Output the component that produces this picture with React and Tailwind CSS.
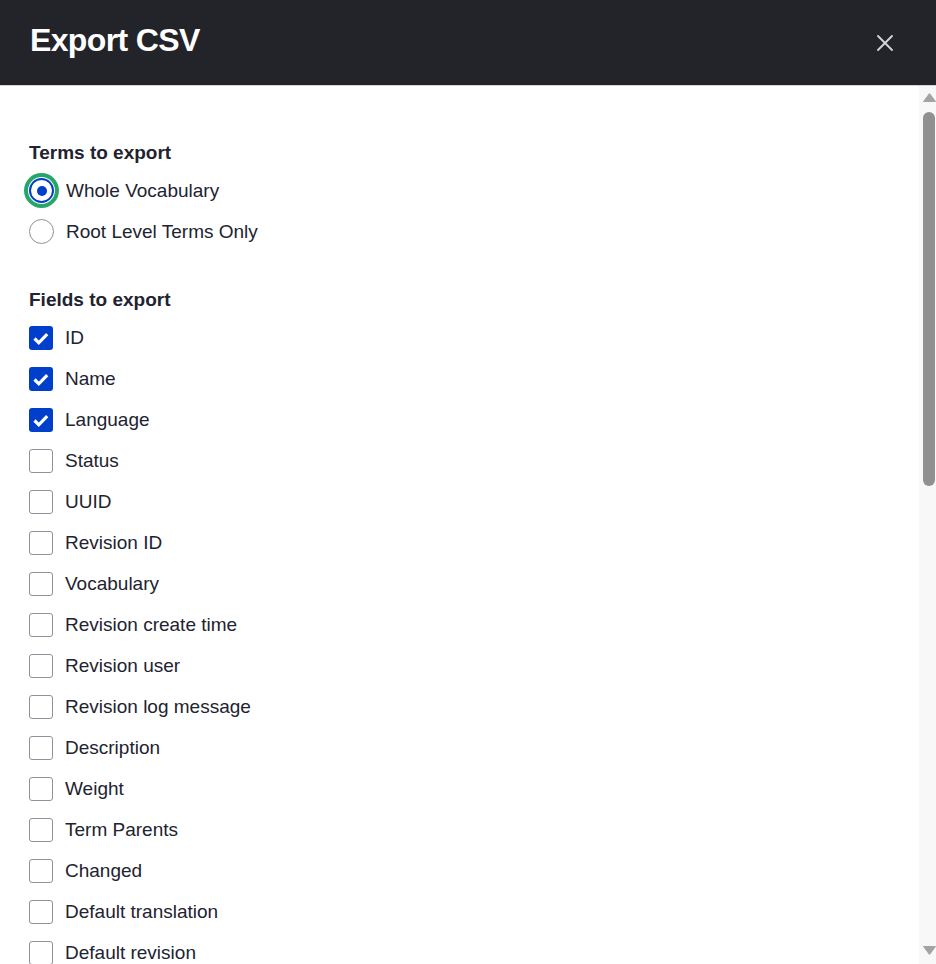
import { X } from 'lucide-react';

const terms = [
    { label: 'Whole Vocabulary', checked: true },
    { label: 'Root Level Terms Only', checked: false },
];

const fields = [
    { label: 'ID', checked: true },
    { label: 'Name', checked: true },
    { label: 'Language', checked: true },
    { label: 'Status' },
    { label: 'UUID' },
    { label: 'Revision ID' },
    { label: 'Vocabulary' },
    { label: 'Revision create time' },
    { label: 'Revision user' },
    { label: 'Revision log message' },
    { label: 'Description' },
    { label: 'Weight' },
    { label: 'Term Parents' },
    { label: 'Changed' },
    { label: 'Default translation' },
    { label: 'Default revision' },
    { label: 'Revision translation affected' },
    { label: 'Published' },
    { label: 'URL alias' },
];

function Radio({ checked }) {
    if (checked) {
        return (
            <span className="flex h-[25px] w-[25px] shrink-0 items-center justify-center rounded-full border-[2.5px] border-[#003ecc] bg-white shadow-[0_0_0_1px_#fff,0_0_0_5px_#26a769]">
                <span className="h-[10px] w-[10px] rounded-full bg-[#003ecc]" />
            </span>
        );
    }
    return <span className="h-[25px] w-[25px] shrink-0 rounded-full border border-[#8e929c] bg-white" />;
}

function Checkbox({ checked }) {
    if (checked) {
        return (
            <span className="flex h-[24px] w-[24px] shrink-0 items-center justify-center rounded-[3px] bg-[#003ecc]">
                <svg width="24" height="24" viewBox="0 0 24 24" fill="none">
                    <path d="M5.5 12.5l4.3 4.3 8.4-8.6" stroke="#fff" strokeWidth="3.2" />
                </svg>
            </span>
        );
    }
    return <span className="h-[24px] w-[24px] shrink-0 rounded-[3px] border border-[#8e929c] bg-white" />;
}

function Fieldset({ title, items, type, className = '' }) {
    return (
        <div className={className}>
            <div className="mb-[4px] text-[19px] font-bold leading-[27px] text-[#222330]">{title}</div>
            {items.map((item) => (
                <label key={item.label} className="flex h-[41px] items-center gap-[12px]">
                    {type === 'radio' ? <Radio checked={item.checked} /> : <Checkbox checked={item.checked} />}
                    <span className="text-[19px] leading-[27px] text-[#222330]">{item.label}</span>
                </label>
            ))}
        </div>
    );
}

function Triangle({ down }) {
    return (
        <svg width="13" height="9" viewBox="0 0 13 9" className={down ? 'rotate-180' : ''}>
            <path d="M6.5 0.5L12.5 8.5H0.5Z" fill="#a3a3a3" strokeLinejoin="round" stroke="#a3a3a3" />
        </svg>
    );
}

export default function App() {
    return (
        <div className="flex h-[964px] w-[936px] flex-col overflow-hidden bg-white font-['Liberation_Sans',Arial,sans-serif]">
            {/* dialog title bar */}
            <header className="flex h-[86px] shrink-0 items-center justify-between border-b border-[#d4d4d8] bg-[#232429] pl-[30px] pr-[37px]">
                <h1 className="pb-[5px] text-[32px] font-bold leading-[32px] tracking-[-0.02em] text-white">Export CSV</h1>
                <button className="flex items-center justify-center text-[#d4d4d8]">
                    <X size={28} strokeWidth={1.6} />
                </button>
            </header>

            <div className="flex min-h-0 flex-1">
                <div className="min-w-0 flex-1 overflow-hidden px-[29px] pt-[53px]">
                    <Fieldset title="Terms to export" items={terms} type="radio" />
                    <Fieldset title="Fields to export" items={fields} type="checkbox" className="mt-[34px]" />
                </div>

                {/* scrollbar */}
                <div className="flex w-[17px] shrink-0 flex-col bg-[#f8f8f8] pl-[4px]">
                    <div className="flex h-[20px] items-start justify-center pt-[7px]">
                        <Triangle />
                    </div>
                    <div className="flex-1 pt-[6px]">
                        <div className="h-[374px] w-[12px] rounded-full bg-[#909090]" />
                    </div>
                    <div className="flex h-[20px] items-start justify-center pt-[2px]">
                        <Triangle down />
                    </div>
                </div>
            </div>
        </div>
    );
}
